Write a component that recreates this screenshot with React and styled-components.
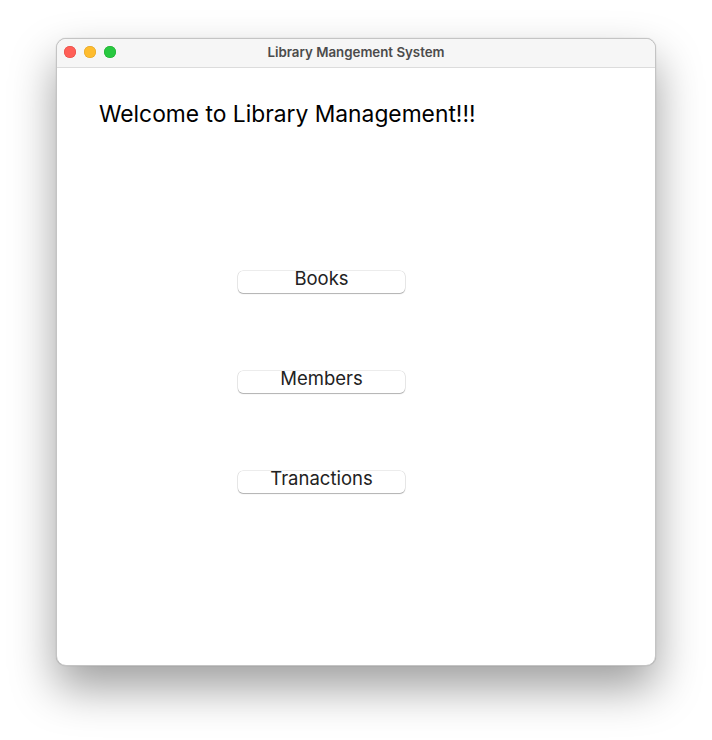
import React from 'react';
import styled, { createGlobalStyle } from 'styled-components';

const GlobalStyle = createGlobalStyle`
  html, body {
    margin: 0;
    padding: 0;
    background: #ffffff;
  }
  body {
    font-family: Inter, "Liberation Sans", Arial, sans-serif;
  }
`;

const menu = ['Books', 'Members', 'Tranactions'];

const App = () => {
  return (
    <>
      <GlobalStyle />
      <Desktop>
        <WindowStyled>
          <TitleBar>
            <Lights>
              <Light color="#ff5f57" border="#e2463f" />
              <Light color="#febc2e" border="#dea123" />
              <Light color="#28c840" border="#1aab29" />
            </Lights>
            <Title>Library Mangement System</Title>
          </TitleBar>
          <Content>
            <Heading>Welcome to Library Management!!!</Heading>
            <ButtonColumn>
              {menu.map(label => (
                <MenuButton key={label}>{label}</MenuButton>
              ))}
            </ButtonColumn>
          </Content>
        </WindowStyled>
      </Desktop>
    </>
  );
};

const Desktop = styled.div`
  width: 712px;
  height: 740px;
  padding: 38px 0 0 56px;
  box-sizing: border-box;
`;

const WindowStyled = styled.div`
  width: 600px;
  height: 628px;
  background: #ffffff;
  border-radius: 10px;
  border: 1px solid #c4c4c4;
  box-sizing: border-box;
  overflow: hidden;
  box-shadow: 0 22px 45px rgba(0, 0, 0, 0.38), 0 0 1px rgba(0, 0, 0, 0.3);
  display: flex;
  flex-direction: column;
`;

const TitleBar = styled.div`
  position: relative;
  height: 28px;
  flex-shrink: 0;
  background: #f6f6f6;
  border-bottom: 1px solid #dcdcdc;
  display: flex;
  align-items: center;
  justify-content: center;
`;

const Lights = styled.div`
  position: absolute;
  left: 7px;
  top: 7px;
  display: flex;
  gap: 8px;
`;

const Light = styled.span`
  width: 12px;
  height: 12px;
  border-radius: 50%;
  background: ${({ color }) => color};
  box-shadow: inset 0 0 0 0.5px ${({ border }) => border};
`;

const Title = styled.div`
  font-size: 13.3px;
  font-weight: 600;
  color: #4b4b4b;
  margin-top: -2px;
`;

const Content = styled.div`
  flex: 1;
  padding: 31px 0 0 42px;
`;

const Heading = styled.h1`
  margin: 0;
  font-size: 22.8px;
  font-weight: normal;
  color: #000000;
  line-height: 29px;
`;

const ButtonColumn = styled.div`
  display: flex;
  flex-direction: column;
  gap: 78px;
  margin: 143px 0 0 139px;
`;

const MenuButton = styled.button`
  width: 167px;
  height: 22px;
  padding: 0;
  background: #ffffff;
  border: none;
  border-radius: 5px;
  box-shadow: 0 0 0 0.5px rgba(0, 0, 0, 0.15), 0 1px 1px rgba(0, 0, 0, 0.25);
  font-family: Inter, "Liberation Sans", Arial, sans-serif;
  font-size: 18.5px;
  line-height: 15px;
  color: #222222;
  display: flex;
  align-items: flex-start;
  justify-content: center;
`;

export default App;
